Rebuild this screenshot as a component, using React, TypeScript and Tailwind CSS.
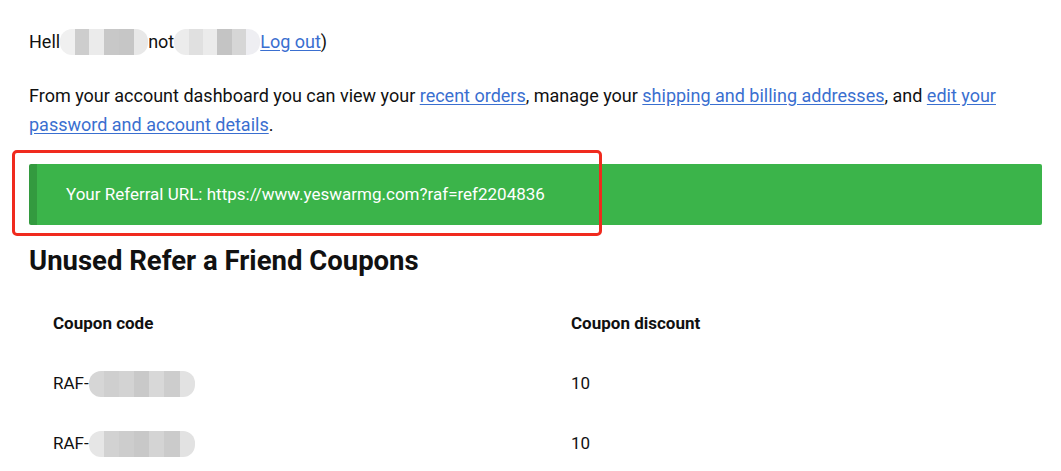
const font = { fontFamily: "Roboto, 'Noto Sans', sans-serif" };

function Blur({ w, tiles }: { w: number; tiles: string[] }) {
  return (
    <span
      className="inline-flex h-[26px] overflow-hidden rounded-[12px] align-middle"
      style={{ width: w }}
    >
      {tiles.map((c, i) => (
        <span key={i} className="h-full flex-1" style={{ backgroundColor: c }} />
      ))}
    </span>
  );
}

const rows = [
  { tiles: ["#d6d6d6", "#cfcfcf", "#d3d3d3", "#c9c9c9", "#d8d8d8", "#cdcdcd", "#e2e2e2"] },
  { tiles: ["#e6e6e6", "#d2d2d2", "#cdcdcd", "#c8c8c8", "#d4d4d4", "#cbcbcb", "#e2e2e2"] },
];

export default function App() {
  return (
    <div className="relative min-h-[471px] w-[1061px] bg-white pl-[29px] pr-[19px] pt-[28px] text-[18px] text-[#111]" style={font}>
      <p className="flex h-[28px] items-center leading-[28px]">
        <span>Hell</span>
        <Blur w={88} tiles={["#f0f0f0", "#cdcdcd", "#ebebeb", "#c8c8c8", "#c6c6c6", "#e8e8e8"]} />
        <span>not</span>
        <Blur w={86} tiles={["#ececec", "#e0e0e0", "#ebebeb", "#c4c4c4", "#d6d6d6", "#eeeef2"]} />
        <a href="#" className="text-[#3a6fd0] underline underline-offset-2">Log out</a>
        <span>)</span>
      </p>

      <p className="mt-[25px] leading-[29px]">
        From your account dashboard you can view your{" "}
        <a href="#" className="text-[#3a6fd0] underline underline-offset-2">recent orders</a>, manage your{" "}
        <a href="#" className="text-[#3a6fd0] underline underline-offset-2">shipping and billing addresses</a>, and{" "}
        <a href="#" className="text-[#3a6fd0] underline underline-offset-2">edit your password and account details</a>.
      </p>

      <div className="mt-[25px] flex h-[61px] items-center rounded-[2px] border-l-[8px] border-[#339a3f] bg-[#3bb44a] pl-[29px] text-[17px] text-white">
        Your Referral URL: https://www.yeswarmg.com?raf=ref2204836
      </div>

      <h2 className="mt-[19px] text-[27.5px] font-bold leading-[34px] text-[#111]">Unused Refer a Friend Coupons</h2>

      <div className="mt-[15px]">
        <div className="grid h-[61px] grid-cols-[518px_1fr] items-center px-[24px] text-[17px] font-bold">
          <span>Coupon code</span>
          <span>Coupon discount</span>
        </div>
        {rows.map((r, i) => (
          <div key={i} className="grid h-[60px] grid-cols-[518px_1fr] items-center px-[24px] text-[17px]">
            <span className="flex items-center">
              RAF-
              <Blur w={106} tiles={r.tiles} />
            </span>
            <span>10</span>
          </div>
        ))}
      </div>

      <div className="pointer-events-none absolute left-[12px] top-[150px] h-[86px] w-[590px] rounded-[5px] border-[3px] border-[#f02a1e]" />
    </div>
  );
}
